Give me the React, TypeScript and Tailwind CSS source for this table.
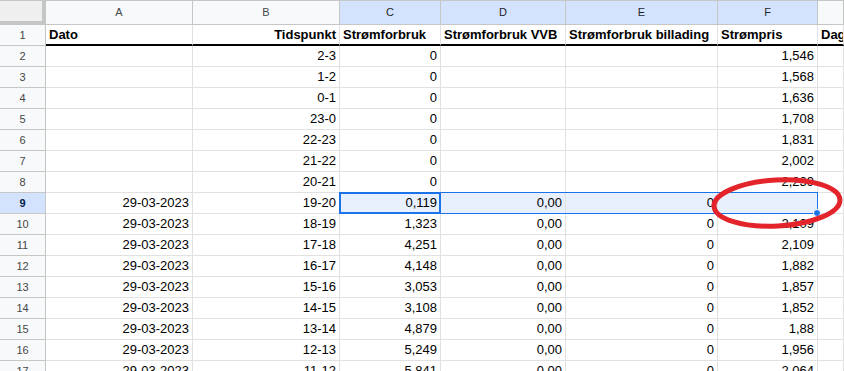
const cols = ["A", "B", "C", "D", "E", "F", ""];
const selectedCols = ["C", "D", "E", "F"];

const rows: string[][] = [
  ["Dato", "Tidspunkt", "Strømforbruk", "Strømforbruk VVB", "Strømforbruk billading", "Strømpris", "Dag"],
  ["", "2-3", "0", "", "", "1,546", ""],
  ["", "1-2", "0", "", "", "1,568", ""],
  ["", "0-1", "0", "", "", "1,636", ""],
  ["", "23-0", "0", "", "", "1,708", ""],
  ["", "22-23", "0", "", "", "1,831", ""],
  ["", "21-22", "0", "", "", "2,002", ""],
  ["", "20-21", "0", "", "", "2,239", ""],
  ["29-03-2023", "19-20", "0,119", "0,00", "0", "", ""],
  ["29-03-2023", "18-19", "1,323", "0,00", "0", "2,109", ""],
  ["29-03-2023", "17-18", "4,251", "0,00", "0", "2,109", ""],
  ["29-03-2023", "16-17", "4,148", "0,00", "0", "1,882", ""],
  ["29-03-2023", "15-16", "3,053", "0,00", "0", "1,857", ""],
  ["29-03-2023", "14-15", "3,108", "0,00", "0", "1,852", ""],
  ["29-03-2023", "13-14", "4,879", "0,00", "0", "1,88", ""],
  ["29-03-2023", "12-13", "5,249", "0,00", "0", "1,956", ""],
  ["29-03-2023", "11-12", "5,841", "0,00", "0", "2,064", ""],
];

function HeaderRow() {
  return (
    <>
      <div className="h-[25px] bg-[#efefef] border-t border-[#c4c7c5] border-r-4 border-b-4 border-r-[#c4c7c5] border-b-[#c4c7c5]" />
      {cols.map((c, i) => {
        const sel = selectedCols.includes(c);
        return (
          <div
            key={i}
            className={
              "h-[25px] border-t border-t-[#c4c7c5] border-r border-b border-[#c4c7c5] flex items-center justify-center text-[11px] " +
              (sel ? "bg-[#d3e3fd] text-[#1f1f1f]" : "bg-[#f8f9fa] text-[#444746]")
            }
          >
            {c}
          </div>
        );
      })}
    </>
  );
}

function DataRow({ idx, cells }: { idx: number; cells: string[] }) {
  const num = idx + 1;
  const isHeader = num === 1;
  const isSel = num === 9;
  return (
    <>
      <div
        className={
          "h-[21px] border-r border-b border-[#c4c7c5] flex items-center justify-center text-[11px] " +
          (isSel ? "bg-[#d3e3fd] text-[#041e49] font-bold" : "bg-[#f8f9fa] text-[#444746]")
        }
      >
        {num}
      </div>
      {cells.map((v, ci) => {
        const inSel = isSel && ci >= 2 && ci <= 5;
        const right = isHeader ? ci === 1 : ci !== 6;
        return (
          <div
            key={ci}
            className={
              "h-[21px] border-r border-[#e1e1e1] px-[3px] flex items-center overflow-hidden whitespace-nowrap text-[13px] text-black " +
              (isHeader ? "border-b-2 border-b-black font-bold " : "border-b ") +
              (right ? "justify-end " : "justify-start ") +
              (inSel ? "bg-[#e8f0fe]" : "bg-white")
            }
          >
            {v}
          </div>
        );
      })}
    </>
  );
}

export default function App() {
  return (
    <div className="relative w-[844px] h-[371px] overflow-hidden bg-white" style={{ fontFamily: '"Liberation Sans", Arial, sans-serif' }}>
      <div className="grid grid-cols-[46px_147px_147px_101px_125px_152px_100px_1fr]">
        <HeaderRow />
        {rows.map((r, i) => (
          <DataRow key={i} idx={i} cells={r} />
        ))}
      </div>

      {/* selected range C9:F9 */}
      <div className="absolute left-[339px] top-[192px] w-[479px] h-[22px] border border-[#1a73e8] pointer-events-none" />
      {/* active cell C9 */}
      <div className="absolute left-[339px] top-[192px] w-[102px] h-[22px] border-2 border-[#1a73e8] pointer-events-none" />
      {/* fill handle */}
      <div className="absolute left-[813px] top-[209px] w-[8px] h-[8px] rounded-full bg-[#1a73e8] border border-white" />

      {/* red circle annotation */}
      <svg className="absolute left-[705px] top-[172px] pointer-events-none" width="145" height="64" viewBox="0 0 145 64">
        <ellipse cx="72" cy="31" rx="63" ry="23" fill="none" stroke="#e3242b" strokeWidth="5" transform="rotate(-3 72 31)" />
      </svg>
    </div>
  );
}
